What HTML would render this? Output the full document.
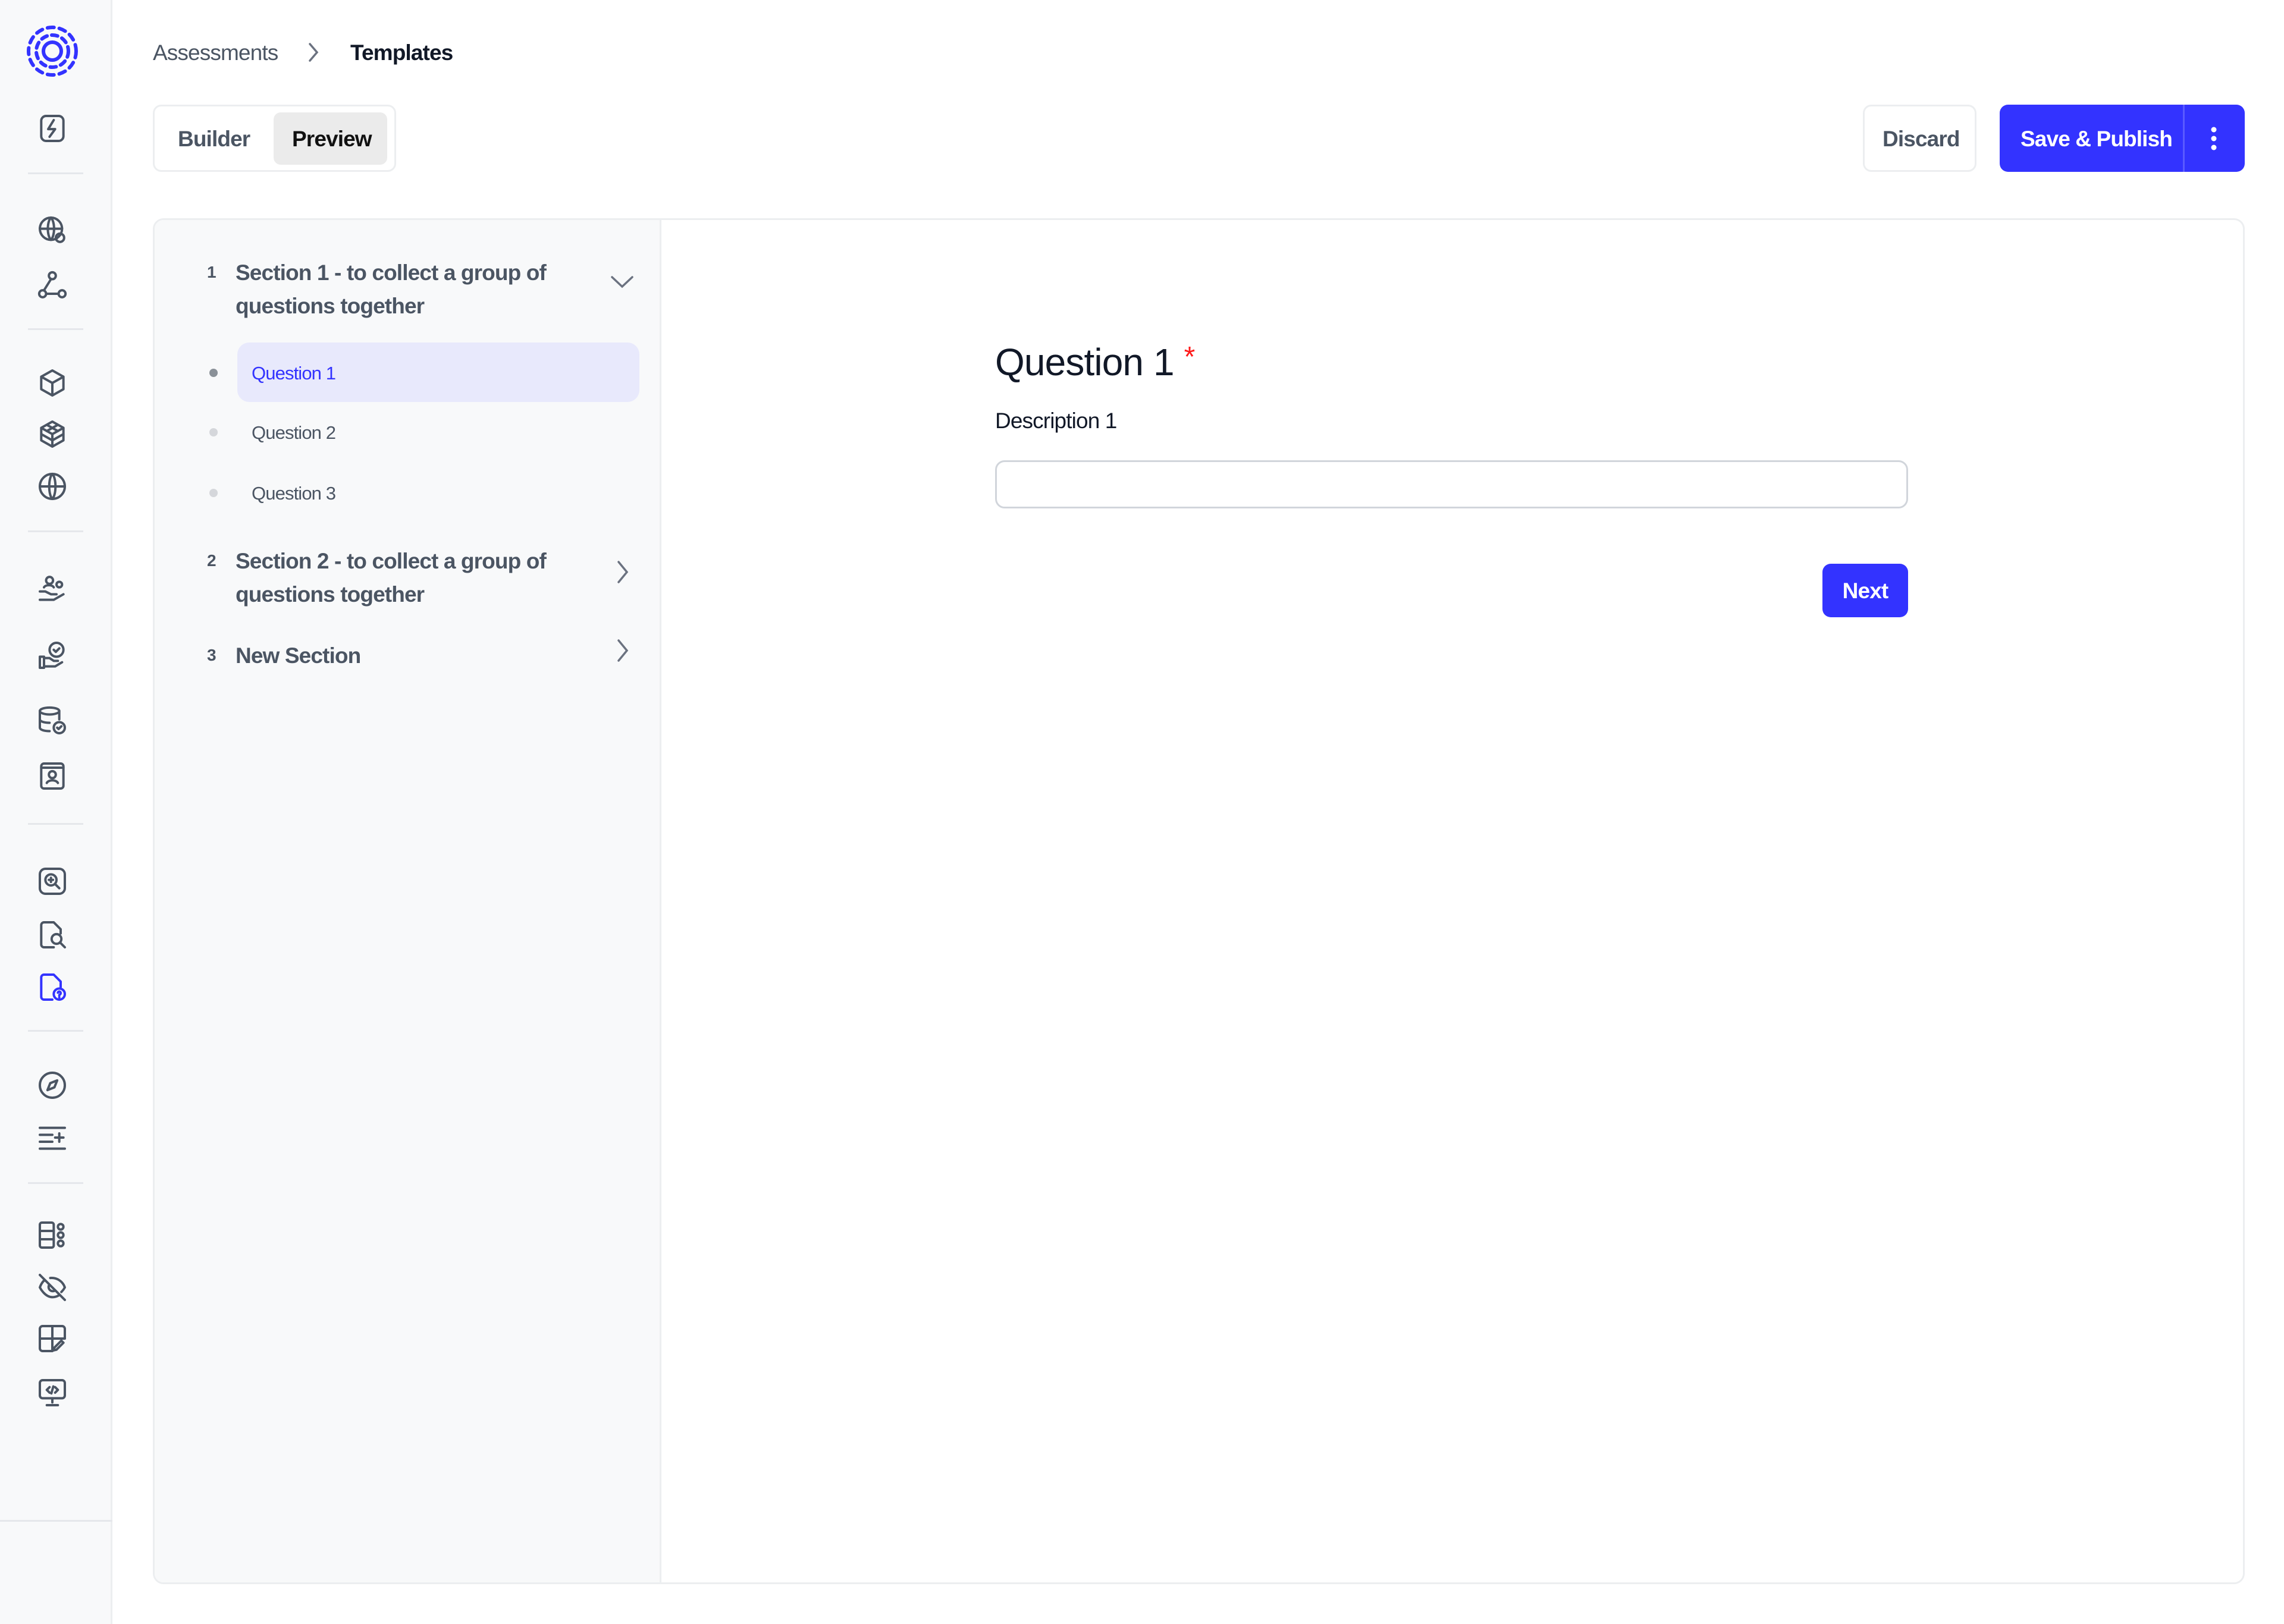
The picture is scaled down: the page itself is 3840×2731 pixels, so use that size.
<!DOCTYPE html>
<html><head><meta charset="utf-8">
<style>
*{box-sizing:border-box;margin:0;padding:0}
body{width:3840px;height:2731px;background:#fff;font-family:"Liberation Sans",sans-serif;position:relative;overflow:hidden;letter-spacing:-0.055em}
.a{position:absolute}
.side{left:0;top:0;width:189px;height:2731px;background:#f8f9fa;border-right:3px solid #eceef0}
.sep{position:absolute;left:47px;width:93px;height:3px;background:#e5e7eb}
.ic{position:absolute;left:60px;width:56px;height:56px}
.ic svg{width:56px;height:56px;fill:none;stroke:#4b5563;stroke-width:1.7;stroke-linecap:round;stroke-linejoin:round}
.t{white-space:nowrap;line-height:1}
</style></head><body>
<div class="a side">
  <svg class="a" style="left:44px;top:42px" width="88" height="88" viewBox="0 0 88 88" fill="none" stroke="#3333ff" stroke-width="6" stroke-linecap="round">
    <circle cx="44" cy="44" r="40" stroke-dasharray="11 9"/>
    <circle cx="44" cy="44" r="27" stroke-dasharray="10 8"/>
    <circle cx="44" cy="44" r="15"/>
  </svg>
  <div class="ic" style="top:188px"><svg viewBox="0 0 24 24"><rect x="4" y="3" width="16" height="18" rx="3.5"/><path d="M13 6l-4 6.5h5L10 18"/></svg></div>
  <div class="sep" style="top:290px"></div>
  <div class="ic" style="top:359px"><svg viewBox="0 0 24 24"><circle cx="11" cy="11" r="8"/><path d="M3 11h16M11 3c-3 3-3 13 0 16M11 3c3 3 3 13 0 16"/><circle cx="17.5" cy="17.5" r="3"/></svg></div>
  <div class="ic" style="top:452px"><svg viewBox="0 0 24 24"><circle cx="12" cy="5" r="2.5"/><circle cx="5" cy="18" r="2.5"/><circle cx="19" cy="18" r="2.5"/><path d="M11 7.5l-5 8M7.5 18h9"/></svg></div>
  <div class="sep" style="top:552px"></div>
  <div class="ic" style="top:616px"><svg viewBox="0 0 24 24"><path d="M12 3l8 4.5v9L12 21l-8-4.5v-9zM4 7.5l8 4.5 8-4.5M12 12v9"/></svg></div>
  <div class="ic" style="top:702px"><svg viewBox="0 0 24 24"><path d="M12 3l8 4.5v9L12 21l-8-4.5v-9zM4 7.5l8 4.5 8-4.5M12 12v9M8 5.3l8 4.5M16 5.3l-8 4.5M4 12l8 4.5 8-4.5"/></svg></div>
  <div class="ic" style="top:790px"><svg viewBox="0 0 24 24"><circle cx="12" cy="12" r="9"/><path d="M3 12h18M12 3c-3 3-3 15 0 18M12 3c3 3 3 15 0 18"/></svg></div>
  <div class="sep" style="top:892px"></div>
  <div class="ic" style="top:962px"><svg viewBox="0 0 24 24"><circle cx="10" cy="6" r="2.5"/><circle cx="17" cy="9" r="2"/><path d="M3 14h4l4 2h4M3 20h10l7-4M6 11c1-2 6-2 7 0"/></svg></div>
  <div class="ic" style="top:1074px"><svg viewBox="0 0 24 24"><circle cx="15" cy="8" r="5"/><path d="M13 8l1.5 1.5L17 7M3 13h3v8H3zM6 14h4l3 2h3M6 20h8l5-3"/></svg></div>
  <div class="ic" style="top:1184px"><svg viewBox="0 0 24 24"><ellipse cx="10" cy="5" rx="7" ry="2.5"/><path d="M3 5v12c0 1.5 3 2.5 7 2.5M17 5v6M3 11c0 1.5 3 2.5 7 2.5"/><circle cx="17" cy="17" r="4"/><path d="M15.5 17l1 1 2-2"/></svg></div>
  <div class="ic" style="top:1277px"><svg viewBox="0 0 24 24"><rect x="4" y="3" width="16" height="18" rx="2"/><circle cx="12" cy="11" r="2.5"/><path d="M8 17c1-2.5 7-2.5 8 0M4 6h16"/></svg></div>
  <div class="sep" style="top:1384px"></div>
  <div class="ic" style="top:1454px"><svg viewBox="0 0 24 24"><rect x="3" y="3" width="18" height="18" rx="4"/><circle cx="11" cy="11" r="4"/><path d="M14 14l3 3M9.5 11h3M11 9.5v3"/></svg></div>
  <div class="ic" style="top:1544px"><svg viewBox="0 0 24 24"><path d="M13 21H6a2 2 0 01-2-2V5a2 2 0 012-2h7l5 5v3"/><circle cx="15" cy="15" r="3.5"/><path d="M17.5 17.5L21 21"/></svg></div>
  <div class="ic" style="top:1632px"><svg viewBox="0 0 24 24" style="stroke:#3333ff"><path d="M12 21H6a2 2 0 01-2-2V5a2 2 0 012-2h7l5 5v4"/><circle cx="17" cy="17" r="4"/><path d="M16 16a1 1 0 112 .5c0 .8-1 .8-1 1.5M17 19.3v.1"/></svg></div>
  <div class="sep" style="top:1732px"></div>
  <div class="ic" style="top:1797px"><svg viewBox="0 0 24 24"><circle cx="12" cy="12" r="9"/><path d="M15.5 8.5l-2 5-5 2 2-5z"/></svg></div>
  <div class="ic" style="top:1885px"><svg viewBox="0 0 24 24"><path d="M3 5h18M3 10h9M3 15h9M3 20h18M17 9v6M14 12h6"/></svg></div>
  <div class="sep" style="top:1988px"></div>
  <div class="ic" style="top:2049px"><svg viewBox="0 0 24 24"><rect x="3" y="3" width="10" height="18" rx="1.5"/><path d="M3 9h10M3 15h10"/><circle cx="18" cy="6" r="2"/><circle cx="18" cy="12" r="2"/><circle cx="18" cy="18" r="2"/></svg></div>
  <div class="ic" style="top:2137px"><svg viewBox="0 0 24 24"><path d="M3 3l18 18M10.5 5.2A10 10 0 0121 12a13 13 0 01-2.5 3.3M6.5 6.5A13 13 0 003 12s3.5 7 9 7c1.8 0 3.4-.5 4.7-1.3M9.9 9.9a3 3 0 004.2 4.2"/></svg></div>
  <div class="ic" style="top:2223px"><svg viewBox="0 0 24 24"><path d="M12 21H5a2 2 0 01-2-2V5a2 2 0 012-2h14a2 2 0 012 2v7M3 12h18M12 3v18"/><path d="M20 15l-5 5-2 .5.5-2 5-5z"/></svg></div>
  <div class="ic" style="top:2314px"><svg viewBox="0 0 24 24"><rect x="3" y="3" width="18" height="13" rx="2"/><path d="M12 16v3M8 21h8M10 8l-2 2 2 2M14 8l2 2-2 2M12.7 7.5l-1.4 5"/></svg></div>
  <div class="a" style="left:0;top:2556px;width:189px;height:3px;background:#e5e7eb"></div>
</div>

<div class="a t" style="left:257px;top:70px;font-size:37px;color:#4b5563">Assessments</div>
<svg class="a" style="left:512px;top:68px" width="30" height="40" viewBox="0 0 30 40" fill="none" stroke="#6b7280" stroke-width="3.5" stroke-linecap="round"><path d="M9 6l12 14-12 14"/></svg>
<div class="a t" style="left:589px;top:70px;font-size:37px;font-weight:bold;color:#111827">Templates</div>

<div class="a" style="left:257px;top:176px;width:409px;height:113px;border:3px solid #eceef0;border-radius:14px"></div>
<div class="a t" style="left:299px;top:215px;font-size:37px;font-weight:bold;color:#4b5563">Builder</div>
<div class="a" style="left:460px;top:189px;width:191px;height:88px;background:#ebebeb;border-radius:12px"></div>
<div class="a t" style="left:491px;top:215px;font-size:37px;font-weight:bold;color:#111">Preview</div>

<div class="a" style="left:3132px;top:176px;width:191px;height:113px;border:3px solid #eceef0;border-radius:14px"></div>
<div class="a t" style="left:3165px;top:215px;font-size:37px;font-weight:bold;color:#4b5563">Discard</div>
<div class="a" style="left:3362px;top:176px;width:412px;height:113px;background:#3333ff;border-radius:14px"></div>
<div class="a" style="left:3670px;top:176px;width:3px;height:113px;background:#5a5aff"></div>
<div class="a t" style="left:3397px;top:215px;font-size:37px;font-weight:bold;color:#fff">Save &amp; Publish</div>
<svg class="a" style="left:3714px;top:210px" width="16" height="46"><circle cx="8" cy="8" r="4.5" fill="#fff"/><circle cx="8" cy="23" r="4.5" fill="#fff"/><circle cx="8" cy="38" r="4.5" fill="#fff"/></svg>

<div class="a" style="left:257px;top:367px;width:3517px;height:2297px;border:3px solid #eceef0;border-radius:18px;overflow:hidden">
  <div class="a" style="left:0;top:0;width:852px;height:2297px;background:#f8f9fa;border-right:3px solid #eceef0"></div>
</div>

<div class="a t" style="left:348px;top:444px;font-size:28px;font-weight:bold;color:#4b5563">1</div>
<div class="a" style="left:396px;top:431px;font-size:37px;font-weight:bold;color:#4b5563;line-height:56px;width:600px">Section 1 - to collect a group of questions together</div>
<svg class="a" style="left:1024px;top:460px" width="44" height="30" fill="none" stroke="#6b7280" stroke-width="3.5" stroke-linecap="round"><path d="M5 6l17 16 17-16"/></svg>

<div class="a" style="left:399px;top:576px;width:676px;height:100px;background:#e8e9fc;border-radius:20px"></div>
<div class="a" style="left:352px;top:620px;width:14px;height:14px;border-radius:50%;background:#8a9198"></div>
<div class="a t" style="left:423px;top:612px;font-size:31px;color:#3333ff">Question 1</div>
<div class="a" style="left:352px;top:720px;width:14px;height:14px;border-radius:50%;background:#d5d7db"></div>
<div class="a t" style="left:423px;top:712px;font-size:31px;color:#4b5563">Question 2</div>
<div class="a" style="left:352px;top:822px;width:14px;height:14px;border-radius:50%;background:#d5d7db"></div>
<div class="a t" style="left:423px;top:814px;font-size:31px;color:#4b5563">Question 3</div>

<div class="a t" style="left:348px;top:929px;font-size:28px;font-weight:bold;color:#4b5563">2</div>
<div class="a" style="left:396px;top:916px;font-size:37px;font-weight:bold;color:#4b5563;line-height:56px;width:600px">Section 2 - to collect a group of questions together</div>
<svg class="a" style="left:1032px;top:940px" width="30" height="44" fill="none" stroke="#6b7280" stroke-width="3.5" stroke-linecap="round"><path d="M8 5l14 17-14 17"/></svg>

<div class="a t" style="left:348px;top:1088px;font-size:28px;font-weight:bold;color:#4b5563">3</div>
<div class="a t" style="left:396px;top:1084px;font-size:37px;font-weight:bold;color:#4b5563">New Section</div>
<svg class="a" style="left:1032px;top:1072px" width="30" height="44" fill="none" stroke="#6b7280" stroke-width="3.5" stroke-linecap="round"><path d="M8 5l14 17-14 17"/></svg>

<div class="a t" style="left:1673px;top:577px;font-size:64px;color:#111827">Question 1 <span style="color:#ff1a1a;font-size:48px;vertical-align:top">*</span></div>
<div class="a t" style="left:1673px;top:689px;font-size:37px;color:#111827">Description 1</div>
<div class="a" style="left:1673px;top:774px;width:1535px;height:81px;border:3px solid #d1d5db;border-radius:16px"></div>
<div class="a" style="left:3064px;top:948px;width:144px;height:90px;background:#3333ff;border-radius:14px"></div>
<div class="a t" style="left:3064px;top:975px;width:144px;text-align:center;font-size:37px;font-weight:bold;color:#fff">Next</div>
</body></html>
